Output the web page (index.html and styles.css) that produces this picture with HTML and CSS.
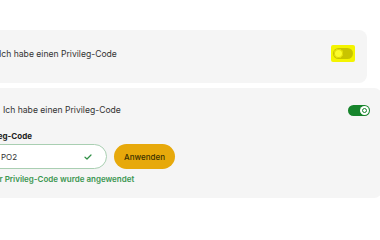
FILE: index.html
```html
<!DOCTYPE html>
<html lang="de">
<head>
<meta charset="utf-8">
<link rel="stylesheet" href="styles.css">
</head>
<body>
<div class="page">
  <div class="card card-off">
    <span class="title">Ich habe einen Privileg-Code</span>
    <span class="hl">
      <span class="toggle toggle-off"><span class="thumb"></span></span>
    </span>
  </div>
  <div class="card card-on">
    <div class="head">
      <span class="title">Ich habe einen Privileg-Code</span>
      <span class="toggle toggle-on"><span class="thumb"></span></span>
    </div>
    <div class="form">
      <div class="label">Privileg-Code</div>
      <div class="row">
        <div class="input">
          <span class="value">PO2</span>
          <svg class="check" width="8" height="6" viewBox="0 0 8 6"><path d="M1 3.2 L3 5 L7 1" fill="none" stroke="#2f8f45" stroke-width="1.2" stroke-linecap="round" stroke-linejoin="round"/></svg>
        </div>
        <button class="apply">Anwenden</button>
      </div>
      <div class="success">Der Privileg-Code wurde angewendet</div>
    </div>
  </div>
</div>
</body>
</html>
```
FILE: styles.css
```css
html, body {
  margin: 0;
  padding: 0;
  background: #ffffff;
  overflow: hidden;
}
body {
  font-family: Inter, "Noto Sans", sans-serif;
  color: #2b2b2b;
}
.page {
  padding-top: 30px;
}
.card {
  background: #f5f5f5;
  border-radius: 8px;
  box-sizing: border-box;
}
.card-off {
  margin-left: -16px;
  width: 383px;
  height: 53px;
  padding: 0 12px 6px 15px;
  display: flex;
  align-items: center;
  justify-content: space-between;
}
.title {
  font-size: 8.6px;
  color: #333333;
}
.hl {
  display: flex;
  background: #f4f400;
  padding: 3px 2px;
  border-radius: 2px;
}
.toggle {
  width: 20px;
  height: 11px;
  border-radius: 6px;
  display: flex;
  align-items: center;
  box-sizing: border-box;
  padding: 0 1px;
}
.toggle-off {
  background: #c9c400;
  justify-content: flex-start;
}
.toggle-off .thumb {
  width: 9px;
  height: 9px;
  border-radius: 50%;
  background: #fbfb2a;
  box-shadow: inset 0 0 0 1px #e0d800;
}
.card-on {
  margin-top: 5px;
  margin-left: -19px;
  width: 401px;
  padding: 15px 12px 14px 22px;
}
.head {
  height: 14px;
  display: flex;
  align-items: center;
  justify-content: space-between;
}
.toggle-on {
  width: 22px;
  background: #16842b;
  justify-content: flex-end;
}
.toggle-on .thumb {
  width: 9px;
  height: 9px;
  border-radius: 50%;
  background: #ffffff;
  display: flex;
  align-items: center;
  justify-content: center;
}
.toggle-on .thumb::after {
  content: "";
  width: 3px;
  height: 3px;
  border-radius: 50%;
  border: 1px solid #16842b;
}
.form {
  margin-left: -25px;
  margin-top: 14px;
}
.label {
  font-size: 8px;
  font-weight: 700;
  line-height: 10px;
  color: #222222;
}
.row {
  display: flex;
  align-items: center;
  margin-top: 3px;
}
.input {
  width: 129px;
  height: 25px;
  box-sizing: border-box;
  border: 1px solid #a9cfb2;
  border-radius: 13px;
  background: #ffffff;
  display: flex;
  align-items: center;
  justify-content: space-between;
  padding: 0 14px 0 22px;
}
.value {
  font-size: 8px;
  color: #333333;
}
.apply {
  margin-left: 7px;
  width: 61px;
  height: 25px;
  border: none;
  border-radius: 13px;
  background: #e7a90b;
  color: #3a3000;
  font-family: Inter, "Noto Sans", sans-serif;
  font-size: 8px;
  font-weight: 500;
  padding: 0;
}
.success {
  margin-top: 5px;
  margin-left: 11px;
  font-size: 8px;
  font-weight: 600;
  line-height: 10px;
  color: #3b9550;
}
```
